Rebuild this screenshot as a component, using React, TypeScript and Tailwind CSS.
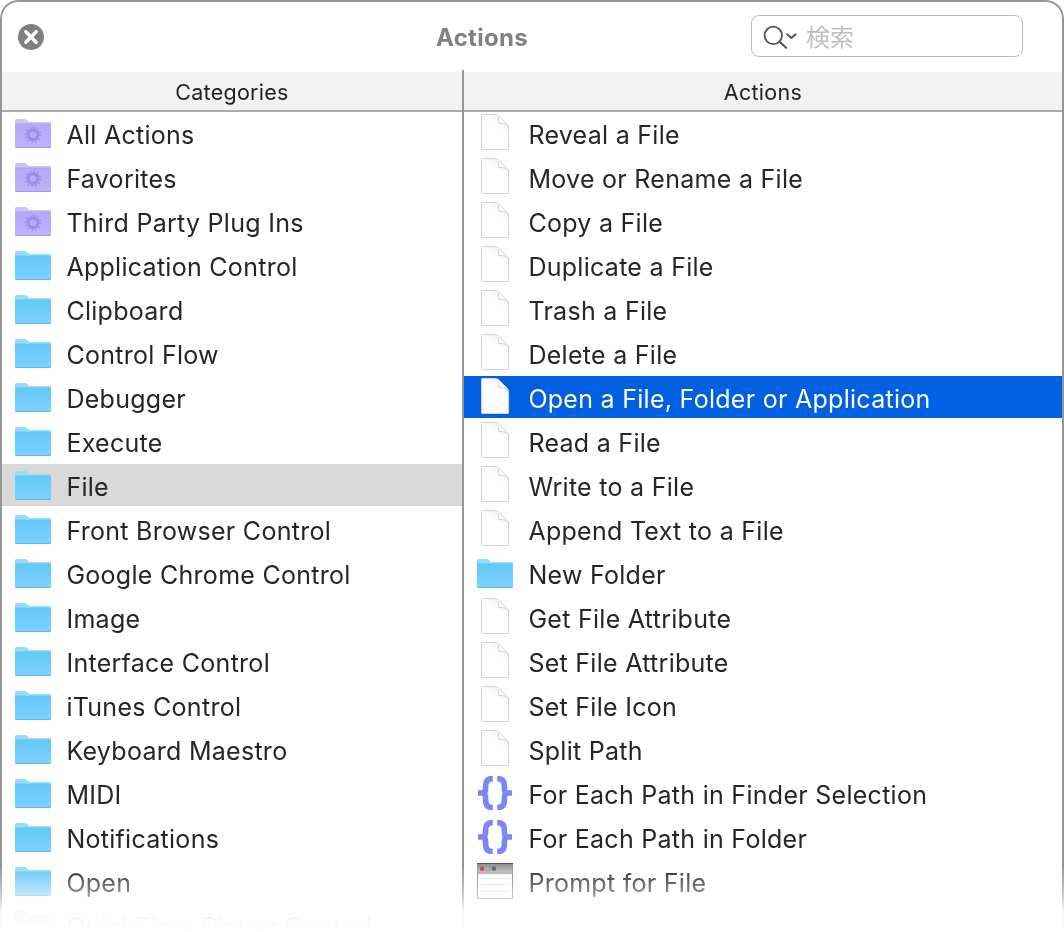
type IconKind = 'smart' | 'folder' | 'doc' | 'braces' | 'window';

interface Item {
  label: string;
  icon: IconKind;
}

const CATEGORIES: Item[] = [
  { label: 'All Actions', icon: 'smart' },
  { label: 'Favorites', icon: 'smart' },
  { label: 'Third Party Plug Ins', icon: 'smart' },
  { label: 'Application Control', icon: 'folder' },
  { label: 'Clipboard', icon: 'folder' },
  { label: 'Control Flow', icon: 'folder' },
  { label: 'Debugger', icon: 'folder' },
  { label: 'Execute', icon: 'folder' },
  { label: 'File', icon: 'folder' },
  { label: 'Front Browser Control', icon: 'folder' },
  { label: 'Google Chrome Control', icon: 'folder' },
  { label: 'Image', icon: 'folder' },
  { label: 'Interface Control', icon: 'folder' },
  { label: 'iTunes Control', icon: 'folder' },
  { label: 'Keyboard Maestro', icon: 'folder' },
  { label: 'MIDI', icon: 'folder' },
  { label: 'Notifications', icon: 'folder' },
  { label: 'Open', icon: 'folder' },
  { label: 'QuickTime Player Control', icon: 'folder' },
];

const ACTIONS: Item[] = [
  { label: 'Reveal a File', icon: 'doc' },
  { label: 'Move or Rename a File', icon: 'doc' },
  { label: 'Copy a File', icon: 'doc' },
  { label: 'Duplicate a File', icon: 'doc' },
  { label: 'Trash a File', icon: 'doc' },
  { label: 'Delete a File', icon: 'doc' },
  { label: 'Open a File, Folder or Application', icon: 'doc' },
  { label: 'Read a File', icon: 'doc' },
  { label: 'Write to a File', icon: 'doc' },
  { label: 'Append Text to a File', icon: 'doc' },
  { label: 'New Folder', icon: 'folder' },
  { label: 'Get File Attribute', icon: 'doc' },
  { label: 'Set File Attribute', icon: 'doc' },
  { label: 'Set File Icon', icon: 'doc' },
  { label: 'Split Path', icon: 'doc' },
  { label: 'For Each Path in Finder Selection', icon: 'braces' },
  { label: 'For Each Path in Folder', icon: 'braces' },
  { label: 'Prompt for File', icon: 'window' },
];

// Gradients shared by all the row icons
function IconDefs() {
  return (
    <svg className="absolute size-0" aria-hidden>
      <defs>
        <linearGradient id="blue" x1="0" y1="0" x2="0" y2="1">
          <stop offset="0" stopColor="#66c8f7" />
          <stop offset="1" stopColor="#7bd3fd" />
        </linearGradient>
        <linearGradient id="purple" x1="0" y1="0" x2="0" y2="1">
          <stop offset="0" stopColor="#b3a9f8" />
          <stop offset="1" stopColor="#bcb4fe" />
        </linearGradient>
        <linearGradient id="paper" x1="0.3" y1="1" x2="0.8" y2="0">
          <stop offset="0.6" stopColor="#ffffff" />
          <stop offset="1" stopColor="#f0f0f0" />
        </linearGradient>
        <linearGradient id="titlebar" x1="0" y1="0" x2="0" y2="1">
          <stop offset="0" stopColor="#8c8c8c" />
          <stop offset="1" stopColor="#c4c4c4" />
        </linearGradient>
      </defs>
    </svg>
  );
}

function FolderIcon({ smart = false }: { smart?: boolean }) {
  return (
    <svg viewBox="0 0 36 36" className="size-9 shrink-0" aria-hidden>
      <path
        d="M0 33V6.5Q0 5 1.5 5H10Q11.2 5 12 6L13 7.3Q13.6 8 14.8 8H34.6Q36 8 36 9.4V33Z"
        fill={smart ? '#c9c5fb' : '#93dcfd'}
      />
      <path d="M0 10H36V32.6Q36 33.8 34.8 33.8H1.2Q0 33.8 0 32.6Z" fill={smart ? 'url(#purple)' : 'url(#blue)'} />
      <path d="M0.3 9.9H35.7" stroke={smart ? '#a79bf0' : '#62c1ef'} strokeWidth="0.7" />
      <path d="M0.6 33.5H35.4" stroke={smart ? '#9c93d8' : '#62b4dc'} strokeWidth="0.9" />
      {smart && (
        <g stroke="#998eea" fill="none">
          <circle cx="18" cy="20.8" r="4.8" strokeWidth="3" />
          <circle cx="18" cy="20.8" r="7.1" strokeWidth="2.2" strokeDasharray="1.6 2.117" />
        </g>
      )}
    </svg>
  );
}

function DocIcon() {
  return (
    <svg viewBox="0 0 36 36" className="size-9 shrink-0" aria-hidden>
      <path
        d="M5.4 0.5H18.2Q20.5 0.6 22.2 2.3L30 10Q31.6 11.8 31.6 14V34.4Q31.6 35.5 30.6 35.5H5.4Q4.5 35.5 4.5 34.6V1.4Q4.5 0.5 5.4 0.5Z"
        fill="url(#paper)"
        stroke="#d4d4d4"
      />
      <path d="M19.5 1C21.5 2.8 22 5.5 21.6 9.4C25.5 9.2 29.5 9.8 31.2 12.2L22.2 2.8Z" fill="#fdfdfd" />
      <path d="M21.6 3V9.6C25.5 9.2 29.3 10 31.2 12.4" fill="none" stroke="#cdcdcd" strokeWidth="0.8" />
    </svg>
  );
}

function BracesIcon() {
  return (
    <svg viewBox="0 0 36 36" className="size-9 shrink-0" aria-hidden>
      <g fill="none" stroke="#7b86fa" strokeWidth="5.6">
        <path d="M15.8 4.6C10.4 4.6 8.6 7.4 8.6 11.5V14C8.6 16.5 7.6 17.6 7.6 19C7.6 20.4 8.6 21.5 8.6 24V26.6C8.6 30.8 10.4 33.6 15.8 33.6" />
        <path d="M20.2 4.6C25.6 4.6 27.4 7.4 27.4 11.5V14C27.4 16.5 28.4 17.6 28.4 19C28.4 20.4 27.4 21.5 27.4 24V26.6C27.4 30.8 25.6 33.6 20.2 33.6" />
      </g>
      <path d="M1 16.2H8V21.8H1ZM28 16.2H35V21.8H28Z" fill="#7b86fa" />
    </svg>
  );
}

function WindowIcon() {
  return (
    <svg viewBox="0 0 36 36" className="size-9 shrink-0 translate-y-px" aria-hidden>
      <rect x="0.5" y="0.5" width="35" height="35" fill="#fff" stroke="#808080" />
      <rect x="0.5" y="0.5" width="35" height="10" fill="url(#titlebar)" />
      <path d="M0 0.5H36" stroke="#555" />
      <path d="M1 10.3H35" stroke="#888" strokeWidth="0.8" />
      <circle cx="5" cy="5.7" r="2.3" fill="#d9363e" />
      <circle cx="11" cy="5.7" r="2" fill="#b5b5b5" stroke="#858585" strokeWidth="0.6" />
      <circle cx="17" cy="5.7" r="2.3" fill="#666" />
      <path d="M3 15.5H33M3 21.8H33M3 28.5H33" stroke="#e0e0e0" />
    </svg>
  );
}

function RowIcon({ kind }: { kind: IconKind }) {
  if (kind === 'doc') return <DocIcon />;
  if (kind === 'braces') return <BracesIcon />;
  if (kind === 'window') return <WindowIcon />;
  return <FolderIcon smart={kind === 'smart'} />;
}

interface ColumnProps {
  title: string;
  items: Item[];
  selected: string;
  selectedClass: string;
}

function Column({ title, items, selected, selectedClass }: ColumnProps) {
  return (
    <>
      <h2 className="h-10 border-b-2 border-[#acacac] bg-[#f2f2f2] text-center text-[21.5px] leading-[40px] tracking-[0.28px] text-[#222]">
        {title}
      </h2>
      <ul className="flex flex-col gap-0.5">
        {items.map((item) => (
          <li
            key={item.label}
            className={`flex h-[42px] shrink-0 items-start gap-[15.4px] pt-0.5 pl-[13px] ${
              item.label === selected ? selectedClass : 'text-[#262626]'
            }`}
          >
            <RowIcon kind={item.icon} />
            <span className="text-[25px] leading-[42px] tracking-[0.28px] whitespace-nowrap">{item.label}</span>
          </li>
        ))}
      </ul>
    </>
  );
}

export default function App() {
  return (
    <div className="h-[932px] w-[1064px] overflow-hidden bg-white font-['Inter','Noto_Sans_CJK_JP',sans-serif]">
      <IconDefs />
      {/* the panel fades out towards the bottom */}
      <div className="flex h-[960px] flex-col rounded-t-[18px] border-2 border-[#969696] mask-[linear-gradient(to_bottom,#000_866px,#0007_896px,#0001_914px,transparent_930px)]">
        <header className="flex h-[68px] shrink-0 items-start">
          <div className="flex w-[300px] pt-[22px] pl-4">
            <svg viewBox="0 0 26 26" className="size-[26px]" aria-hidden>
              <circle cx="13" cy="13" r="13" fill="#808080" />
              <path d="M7.8 7.8L18.2 18.2M18.2 7.8L7.8 18.2" stroke="#fff" strokeWidth="3.4" strokeLinecap="round" />
            </svg>
          </div>
          <h1 className="w-[360px] pt-[15px] text-center text-[24px] leading-[42px] font-bold tracking-[0.3px] text-[#808080]">
            Actions
          </h1>
          <div className="mt-[13px] ml-[89px] flex h-[42px] w-[272px] items-center rounded-lg border border-[#bababa] pl-[11px]">
            <svg viewBox="0 0 34 26" className="h-[26px] w-[34px] shrink-0" fill="none" stroke="#555" aria-hidden>
              <circle cx="10.3" cy="12.4" r="8.7" strokeWidth="1.8" />
              <path d="M16.6 18.7L23.2 24.8" strokeWidth="2.1" strokeLinecap="round" />
              <path d="M24.2 11.3L28.4 15L32.6 11.3" strokeWidth="2" strokeLinecap="round" strokeLinejoin="round" />
            </svg>
            <span className="ml-[9px] pt-[3px] text-[24px] leading-[40px] text-[#bfbfbf]">検索</span>
          </div>
        </header>
        <main className="flex min-h-0 flex-1">
          <section className="w-[460px] shrink-0 pt-0.5">
            <Column title="Categories" items={CATEGORIES} selected="File" selectedClass="bg-[#d9d9d9] text-[#262626]" />
          </section>
          <div className="w-0.5 shrink-0 bg-[#969696]" />
          <section className="min-w-0 flex-1 pt-0.5">
            <Column
              title="Actions"
              items={ACTIONS}
              selected="Open a File, Folder or Application"
              selectedClass="bg-[#0160e2] text-white"
            />
          </section>
        </main>
      </div>
    </div>
  );
}
